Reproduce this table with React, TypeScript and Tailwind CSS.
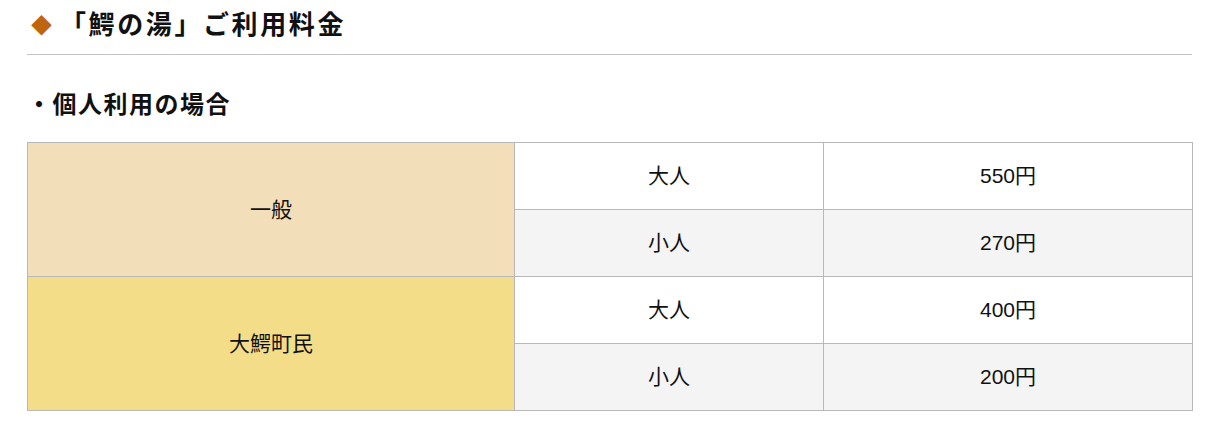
import React from "react";

type PriceRow = { label: string; price: string };
type PriceGroup = { name: string; bg: string; rows: PriceRow[] };

const GROUPS: PriceGroup[] = [
  {
    name: "一般",
    bg: "bg-[#f2dfb9]",
    rows: [
      { label: "大人", price: "550円" },
      { label: "小人", price: "270円" },
    ],
  },
  {
    name: "大鰐町民",
    bg: "bg-[#f4dd88]",
    rows: [
      { label: "大人", price: "400円" },
      { label: "小人", price: "200円" },
    ],
  },
];

const App = () => {
  return (
    <div
      className="w-[1225px] h-[433px] bg-white text-[#111] pl-[27px] pr-[33px] pt-[7px]"
      style={{ fontFamily: '"Liberation Sans", "Noto Sans CJK JP", sans-serif' }}
    >
      <h1 className="flex items-center h-[36px] border-b border-[#c4c4c4] box-content pb-[11px]">
        <span className="text-[#c0650e] text-[21px] w-[33px] pl-[4px] leading-none">◆</span>
        <span className="text-[26px] font-bold tracking-[2.6px] leading-none">「鰐の湯」ご利用料金</span>
      </h1>
      <h2 className="mt-[35px] h-[30px] flex items-center text-[24px] font-bold tracking-[1.5px] leading-none">
        ・個人利用の場合
      </h2>
      <table className="mt-[22px] w-[1165px] border-collapse table-fixed text-[21px]">
        <colgroup>
          <col className="w-[487px]" />
          <col className="w-[309px]" />
          <col className="w-[369px]" />
        </colgroup>
        <tbody>
          {GROUPS.map((group) =>
            group.rows.map((row, i) => (
              <tr key={group.name + row.label} className="h-[67px]">
                {i === 0 && (
                  <td
                    rowSpan={group.rows.length}
                    className={`${group.bg} border border-[#b8b8b8] text-center align-middle`}
                  >
                    {group.name}
                  </td>
                )}
                <td
                  className={`border border-[#b8b8b8] text-center align-middle ${
                    i % 2 === 1 ? "bg-[#f4f4f4]" : "bg-white"
                  }`}
                >
                  {row.label}
                </td>
                <td
                  className={`border border-[#b8b8b8] text-center align-middle ${
                    i % 2 === 1 ? "bg-[#f4f4f4]" : "bg-white"
                  }`}
                >
                  {row.price}
                </td>
              </tr>
            ))
          )}
        </tbody>
      </table>
    </div>
  );
};

export default App;
